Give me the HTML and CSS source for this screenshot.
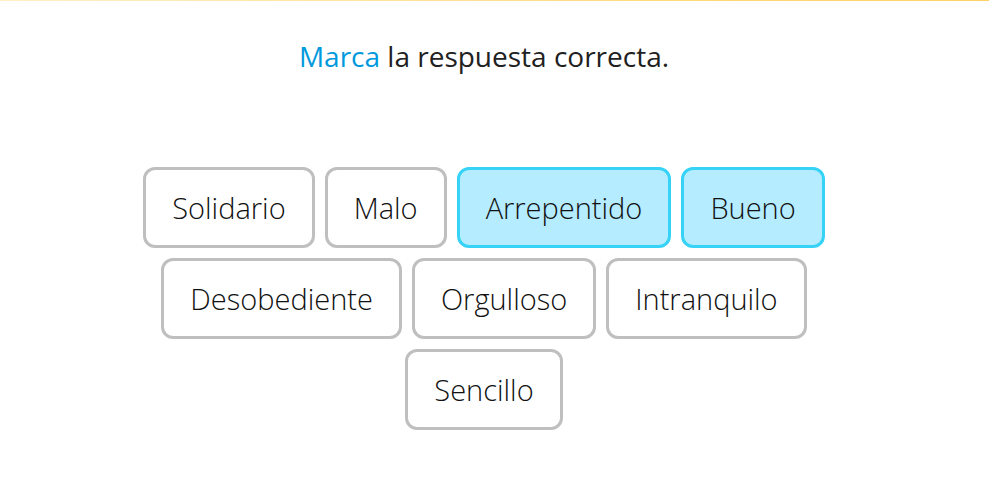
FILE: index.html
```html
<!DOCTYPE html>
<html lang="es">
<head>
<meta charset="utf-8">
<meta name="viewport" content="width=device-width, initial-scale=1">
<title>Marca la respuesta correcta</title>
<link rel="stylesheet" href="styles.css">
</head>
<body>
<main class="quiz">
  <h1 class="prompt"><span class="prompt-action">Marca</span> la respuesta correcta.</h1>
  <div class="options">
    <button class="option" type="button" aria-pressed="false">Solidario</button>
    <button class="option" type="button" aria-pressed="false">Malo</button>
    <button class="option selected" type="button" aria-pressed="true">Arrepentido</button>
    <button class="option selected" type="button" aria-pressed="true">Bueno</button>
    <button class="option" type="button" aria-pressed="false">Desobediente</button>
    <button class="option" type="button" aria-pressed="false">Orgulloso</button>
    <button class="option" type="button" aria-pressed="false">Intranquilo</button>
    <button class="option" type="button" aria-pressed="false">Sencillo</button>
  </div>
</main>
</body>
</html>
```

FILE: styles.css
```css
* {
  box-sizing: border-box;
}

body {
  margin: 0;
  background: #fff;
  color: #212121;
  font-family: "Segoe UI", "Open Sans", "Noto Sans", sans-serif;
}

body::before {
  content: "";
  display: block;
  height: 1px;
  background: linear-gradient(to right, #fff0c8, #ffd978 70%, #ffd166);
}

.quiz {
  padding: 35px 21px 63px 0;
}

.prompt {
  margin: 0 0 91px;
  font-size: 28px;
  font-weight: 400;
  line-height: 40px;
  text-align: center;
}

.prompt-action {
  color: #0099dd;
}

.options {
  display: flex;
  flex-wrap: wrap;
  justify-content: center;
  gap: 10px;
  max-width: 700px;
  margin: 0 auto;
}

.option {
  padding: 18px 26px 17px;
  border: 3px solid #bfbfbf;
  border-radius: 12px;
  background: #fff;
  color: #111;
  font-family: inherit;
  font-size: 29px;
  font-weight: 300;
  line-height: 40px;
}

.option.selected {
  border-color: #36d3f7;
  background: #b5ecff;
}
```
